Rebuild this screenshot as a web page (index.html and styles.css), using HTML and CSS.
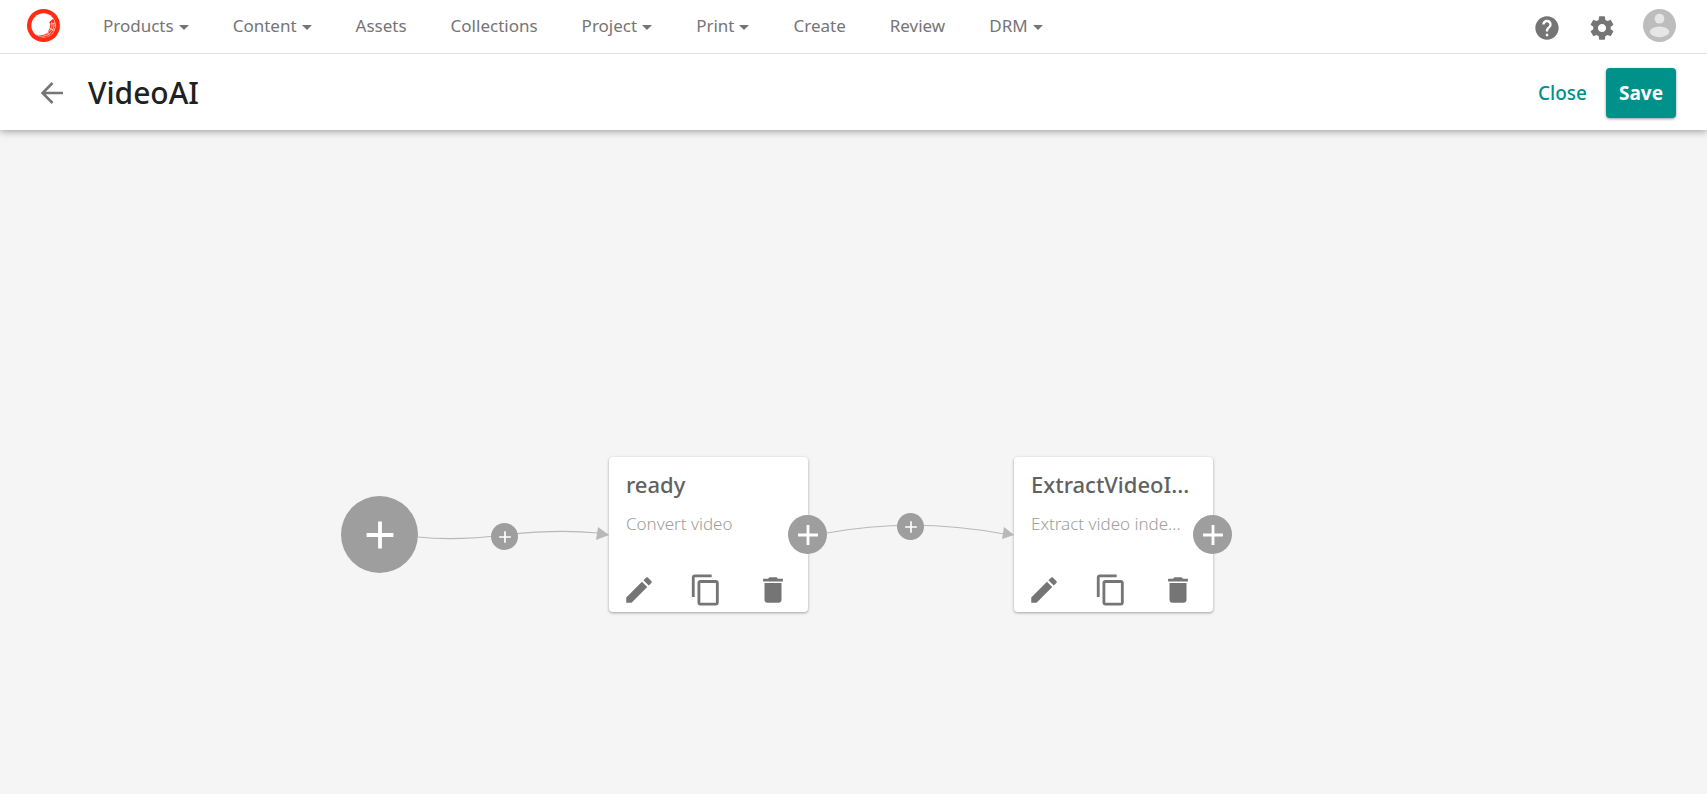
FILE: index.html
```html
<!DOCTYPE html>
<html lang="en">
<head>
<meta charset="utf-8">
<title>VideoAI</title>
<link rel="stylesheet" href="styles.css">
</head>
<body>
<svg class="sprite" aria-hidden="true">
  <symbol id="plus" viewBox="0 0 24 24"><path d="M19 13h-6v6h-2v-6H5v-2h6V5h2v6h6v2z"/></symbol>
  <symbol id="edit" viewBox="0 0 24 24"><path d="M3 17.25V21h3.75L17.81 9.94l-3.75-3.75L3 17.25zM20.71 7.04c.39-.39.39-1.02 0-1.41l-2.34-2.34c-.39-.39-1.02-.39-1.41 0l-1.83 1.83 3.75 3.75 1.83-1.83z"/></symbol>
  <symbol id="copy" viewBox="0 0 24 24"><path d="M16 1H4c-1.1 0-2 .9-2 2v14h2V3h12V1zm3 4H8c-1.1 0-2 .9-2 2v14c0 1.1.9 2 2 2h11c1.1 0 2-.9 2-2V7c0-1.1-.9-2-2-2zm0 16H8V7h11v14z"/></symbol>
  <symbol id="trash" viewBox="0 0 24 24"><path d="M6 19c0 1.1.9 2 2 2h8c1.1 0 2-.9 2-2V7H6v12zM19 4h-3.5l-1-1h-5l-1 1H5v2h14V4z"/></symbol>
</svg>
<div class="app">
  <header class="topbar">
    <a class="logo" href="#" aria-label="Home">
      <svg viewBox="0 0 34 34"><circle cx="17" cy="17" r="17" fill="#ff2b12"/><circle cx="17" cy="17" r="12.5" fill="#fff"/><path d="M23 13.5l4-3.5c3 5 2.500 12-2 16-5 4.500-12 4.500-16.500 0 5 2 10 1 13-2.500 2.500-3 3-7 1.500-10z" fill="#ff2b12"/><path d="M7.500 23c6 5 13.500 4 17-2 1.400-2.500 1.500-5 1-7.500M8 25.500c7 5 15.500 2 18.500-4 1.200-2.500 1.500-5 1.200-7.500M24 15.500l4-.5M23.500 20l4 2M20.500 23.500l2.500 3.500" fill="none" stroke="#fff" stroke-width=".7"/></svg>
    </a>
    <nav class="menu">
      <button class="menu-item caret">Products</button>
      <button class="menu-item caret">Content</button>
      <a class="menu-item" href="#">Assets</a>
      <a class="menu-item" href="#">Collections</a>
      <button class="menu-item caret">Project</button>
      <button class="menu-item caret">Print</button>
      <a class="menu-item" href="#">Create</a>
      <a class="menu-item" href="#">Review</a>
      <button class="menu-item caret">DRM</button>
    </nav>
    <div class="tools">
      <button class="tool" aria-label="Help"><svg viewBox="0 0 24 24"><path d="M12 2C6.480 2 2 6.480 2 12s4.480 10 10 10 10-4.480 10-10S17.520 2 12 2zm1 17h-2v-2h2v2zm2.070-7.750l-.9.920C13.450 12.900 13 13.500 13 15h-2v-.5c0-1.100.450-2.100 1.170-2.830l1.240-1.260c.370-.360.590-.860.590-1.410 0-1.100-.9-2-2-2s-2 .9-2 2H8c0-2.210 1.790-4 4-4s4 1.790 4 4c0 .880-.360 1.680-.930 2.250z"/></svg></button>
      <button class="tool" aria-label="Settings"><svg viewBox="0 0 24 24"><path d="M19.430 12.980c.040-.320.070-.640.070-.980s-.030-.660-.070-.980l2.110-1.650c.190-.150.240-.420.120-.640l-2-3.460c-.120-.220-.390-.300-.610-.220l-2.490 1c-.520-.400-1.080-.730-1.690-.980l-.380-2.650C14.460 2.180 14.250 2 14 2h-4c-.250 0-.460.180-.490.420l-.380 2.650c-.610.250-1.170.590-1.690.980l-2.490-1c-.230-.090-.490 0-.610.220l-2 3.460c-.130.220-.070.490.120.640l2.110 1.650c-.040.320-.070.650-.070.980s.030.660.070.980l-2.110 1.650c-.190.150-.240.420-.120.640l2 3.460c.120.220.390.300.610.220l2.490-1c.520.400 1.080.730 1.690.980l.380 2.650c.030.240.240.420.490.420h4c.250 0 .460-.180.490-.420l.380-2.650c.610-.250 1.170-.590 1.690-.980l2.490 1c.230.090.490 0 .610-.220l2-3.460c.120-.220.070-.490-.120-.640l-2.110-1.650zM12 15.500c-1.930 0-3.500-1.570-3.500-3.500s1.570-3.500 3.500-3.500 3.500 1.570 3.500 3.500-1.570 3.500-3.500 3.500z"/></svg></button>
      <button class="avatar" aria-label="Account"><svg viewBox="0 0 34 34"><circle cx="17" cy="17" r="17" fill="#bdbdbd"/><circle cx="17" cy="10" r="5" fill="#e6e6e6"/><ellipse cx="17" cy="23.500" rx="10" ry="5.500" fill="#e6e6e6"/></svg></button>
    </div>
  </header>
  <div class="titlebar">
    <button class="back" aria-label="Back"><svg viewBox="0 0 22 22"><path d="M22 11H2M11.500 1L1.500 11l10 10" fill="none" stroke="#757575" stroke-width="2.600"/></svg></button>
    <h1 class="title">VideoAI</h1>
    <button class="close">Close</button>
    <button class="save">Save</button>
  </div>
  <main class="canvas">
    <svg class="links" aria-hidden="true">
      <g fill="none" stroke="#b8b8b8" stroke-width="1.200">
        <path d="M418 407Q455 411 505 405Q556 399 598 403"/>
        <path d="M827 403Q914 387 1004 404"/>
      </g>
      <g fill="#b8b8b8"><path d="M598 397L609 405L596 410z"/><path d="M1004 397L1014 405L1002 409z"/></g>
    </svg>
    <button class="add add-start" aria-label="Add first action"><svg><use href="#plus"/></svg></button>
    <button class="add add-link link-one" aria-label="Insert action"><svg><use href="#plus"/></svg></button>
    <button class="add add-link link-two" aria-label="Insert action"><svg><use href="#plus"/></svg></button>
    <article class="card card-one">
      <h2 class="card-name">ready</h2>
      <p class="card-kind">Convert video</p>
      <div class="card-actions">
        <button class="action" aria-label="Edit"><svg><use href="#edit"/></svg></button>
        <button class="action" aria-label="Copy"><svg><use href="#copy"/></svg></button>
        <button class="action" aria-label="Delete"><svg><use href="#trash"/></svg></button>
      </div>
      <button class="add add-next" aria-label="Add next action"><svg><use href="#plus"/></svg></button>
    </article>
    <article class="card card-two">
      <h2 class="card-name">ExtractVideoI...</h2>
      <p class="card-kind">Extract video inde...</p>
      <div class="card-actions">
        <button class="action" aria-label="Edit"><svg><use href="#edit"/></svg></button>
        <button class="action" aria-label="Copy"><svg><use href="#copy"/></svg></button>
        <button class="action" aria-label="Delete"><svg><use href="#trash"/></svg></button>
      </div>
      <button class="add add-next" aria-label="Add next action"><svg><use href="#plus"/></svg></button>
    </article>
  </main>
</div>
</body>
</html>
```
FILE: styles.css
```css
* { box-sizing: border-box; }
body { margin: 0; font-family: "Noto Sans", "Open Sans", sans-serif; background: #f5f5f5; color: #212121; }
button { font: inherit; color: inherit; background: none; border: 0; padding: 0; cursor: pointer; }
a { color: inherit; text-decoration: none; }
svg { display: block; fill: currentColor; }
.sprite { display: none; }
.app { display: flex; flex-direction: column; min-height: 100vh; }

.topbar { position: relative; z-index: 2; display: flex; align-items: center; padding: 9px 31px 11px 27px; background: #fff; border-bottom: 1px solid #e0e0e0; }
.logo svg, .avatar svg { width: 33px; height: 33px; }
.menu { display: flex; align-items: center; gap: 44px; margin-left: 43px; font-size: 17px; line-height: 22px; color: #757575; }
.menu-item { display: flex; align-items: center; white-space: nowrap; }
.caret::after { content: ""; margin: 4px 0 0 5px; border: 5px solid transparent; border-top-color: #757575; border-bottom: 0; }
.tools { display: flex; align-items: center; gap: 27px; margin-left: auto; color: #757575; }
.tool { padding-top: 5px; }
.tool svg { width: 28px; height: 28px; }

.titlebar { position: relative; z-index: 1; display: flex; align-items: center; padding: 14px 31px 12px 41px; background: #fff; box-shadow: 0 1px 8px rgba(0, 0, 0, .4); }
.back svg { width: 22px; height: 22px; }
.title { margin: 0 auto 0 25px; font-size: 30px; line-height: 40px; font-weight: 500; }
.close { margin-right: 19px; font-size: 19px; font-weight: 500; color: #00918b; }
.save { padding: 12px 13px; border-radius: 4px; font-size: 19px; line-height: 26px; font-weight: 700; color: #fff; background: #00918b; box-shadow: 0 1px 3px rgba(0, 0, 0, .4); }

.canvas { position: relative; flex: 1; min-height: 520px; }
.links { position: absolute; inset: 0; width: 100%; height: 100%; }
.add { position: absolute; display: flex; align-items: center; justify-content: center; border-radius: 50%; color: #fff; background: #9e9e9e; }
.add-start { left: 341px; top: 366px; width: 77px; height: 77px; }
.add-start svg { width: 46px; height: 46px; }
.add-link { width: 27px; height: 27px; }
.add-link svg { width: 20px; height: 20px; }
.link-one { left: 491px; top: 393px; }
.link-two { left: 897px; top: 383px; }
.add-next { right: -19px; top: 58px; width: 39px; height: 39px; }
.add-next svg { width: 34px; height: 34px; }

.card { position: absolute; top: 327px; width: 199px; padding: 12px 17px 5px; border-radius: 4px; background: #fff; box-shadow: 0 1px 3px rgba(0, 0, 0, .35); }
.card-one { left: 609px; }
.card-two { left: 1014px; }
.card-name { margin: 0; font-size: 22px; line-height: 30px; font-weight: 500; color: #616161; white-space: nowrap; }
.card-kind { margin: 13px 0 0; font-size: 17px; line-height: 24px; font-weight: 300; color: #9e9e9e; white-space: nowrap; }
.card-actions { display: flex; justify-content: space-between; margin: 37px 1px 0 -4px; color: #757575; }
.action svg { width: 34px; height: 34px; }
```
